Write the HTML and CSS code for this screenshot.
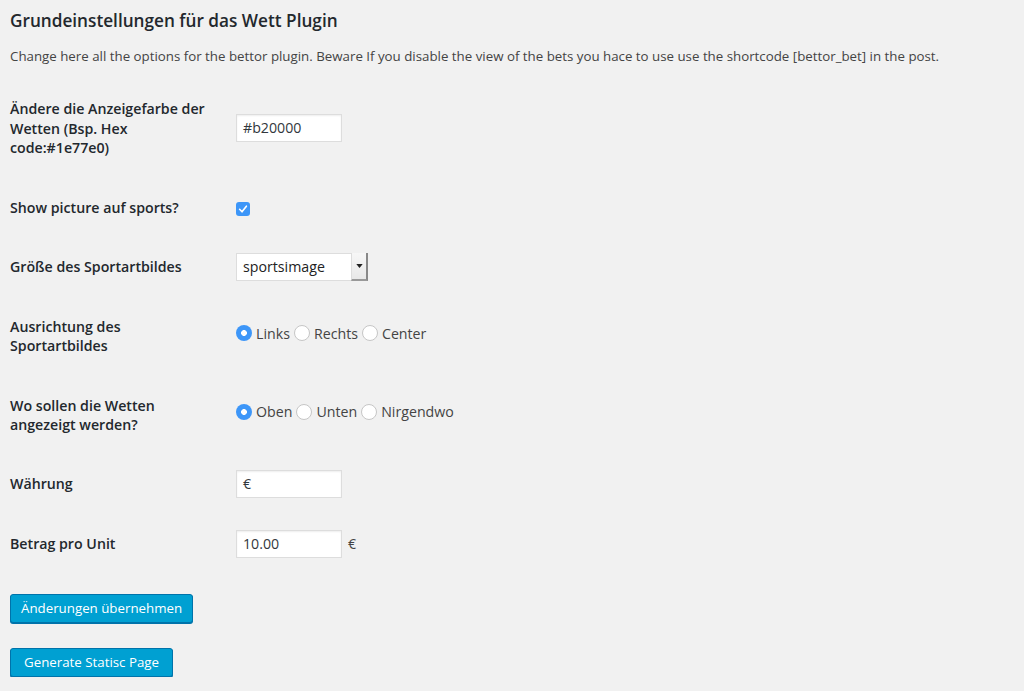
FILE: index.html
```html
<!DOCTYPE html>
<html lang="de">
<head>
<meta charset="utf-8">
<title>Grundeinstellungen</title>
<link rel="stylesheet" href="styles.css">
</head>
<body>
<div class="wrap">
  <h2 class="title">Grundeinstellungen für das Wett Plugin</h2>
  <p class="desc">Change here all the options for the bettor plugin. Beware If you disable the view of the bets you hace to use use the shortcode [bettor_bet] in the post.</p>
  <table class="form-table">
    <tr class="row-color">
      <th>Ändere die Anzeigefarbe der Wetten (Bsp. Hex code:#1e77e0)</th>
      <td><span class="text-input">#b20000</span></td>
    </tr>
    <tr>
      <th>Show picture auf sports?</th>
      <td><span class="checkbox"><svg viewBox="0 0 14 14" width="14" height="14"><path d="M3.6 7.3 L6 9.8 L10.4 4.2" fill="none" stroke="#fff" stroke-width="1.6" stroke-linecap="round" stroke-linejoin="round"/></svg></span></td>
    </tr>
    <tr>
      <th>Größe des Sportartbildes</th>
      <td><span class="select"><span class="select-value">sportsimage</span><span class="select-arrow"><svg viewBox="0 0 8 5" width="7" height="4"><path d="M0 0 H8 L4 5 Z" fill="#222"/></svg></span></span></td>
    </tr>
    <tr class="row-radio">
      <th>Ausrichtung des Sportartbildes</th>
      <td>
        <span class="radio-group">
          <span class="radio on"></span><span class="radio-label">Links</span>
          <span class="radio"></span><span class="radio-label">Rechts</span>
          <span class="radio"></span><span class="radio-label">Center</span>
        </span>
      </td>
    </tr>
    <tr class="row-radio row-position">
      <th>Wo sollen die Wetten angezeigt werden?</th>
      <td>
        <span class="radio-group">
          <span class="radio on"></span><span class="radio-label">Oben</span>
          <span class="radio"></span><span class="radio-label">Unten</span>
          <span class="radio"></span><span class="radio-label">Nirgendwo</span>
        </span>
      </td>
    </tr>
    <tr class="row-currency">
      <th>Währung</th>
      <td><span class="text-input">€</span></td>
    </tr>
    <tr>
      <th>Betrag pro Unit</th>
      <td><span class="text-input">10.00</span><span class="unit">€</span></td>
    </tr>
  </table>
  <div class="actions">
    <button class="button">Änderungen übernehmen</button>
  </div>
  <div class="actions second">
    <button class="button button-wide">Generate Statisc Page</button>
  </div>
</div>
</body>
</html>
```

FILE: styles.css
```css
html, body {
  margin: 0;
  padding: 0;
  background: #f1f1f1;
}
body {
  font-family: "Open Sans", "Noto Sans", sans-serif;
  color: #444;
  font-size: 13px;
}
.wrap {
  padding: 0 10px;
}
.title {
  margin: 0;
  padding-top: 9px;
  font-size: 17.2px;
  font-weight: 600;
  line-height: 23px;
  color: #23282d;
}
.desc {
  margin: 14px 0 0;
  font-size: 13.3px;
  line-height: 20px;
  color: #444;
}
.form-table {
  border-collapse: collapse;
  margin-top: 13px;
}
.form-table th {
  width: 206px;
  padding: 20px 20px 20px 0;
  text-align: left;
  vertical-align: top;
  font-size: 14.2px;
  font-weight: 600;
  line-height: 19.5px;
  color: #23282d;
}
.form-table td {
  padding: 0;
  vertical-align: middle;
  font-size: 14.2px;
  line-height: 19.5px;
  color: #444;
}
.row-position th {
  padding-bottom: 19px;
}
.row-currency th {
  padding-bottom: 21px;
}
.text-input {
  display: inline-block;
  box-sizing: border-box;
  width: 106px;
  height: 28px;
  padding: 3px 6px;
  background: #fff;
  border: 1px solid #ddd;
  box-shadow: inset 0 1px 2px rgba(0,0,0,.07);
  color: #32373c;
  font-size: 14.2px;
  line-height: 20px;
  vertical-align: middle;
}
.unit {
  margin-left: 6px;
  vertical-align: middle;
}
.checkbox {
  display: inline-block;
  width: 14px;
  height: 14px;
  border-radius: 3px;
  background: #3d96f8;
  vertical-align: middle;
}
.checkbox svg {
  display: block;
}
.select {
  display: inline-flex;
  box-sizing: border-box;
  width: 132px;
  height: 28px;
  background: #fff;
  border: 1px solid #ddd;
  vertical-align: middle;
}
.select-value {
  flex: 1;
  padding: 3px 6px;
  font-size: 14.2px;
  line-height: 20px;
  color: #222;
}
.select-arrow {
  width: 14px;
  display: flex;
  align-items: center;
  justify-content: center;
  background: linear-gradient(#f7f7f7, #e8e8e8);
  border-left: 1px solid #ddd;
  border-right: 2px solid #888;
  border-bottom: 2px solid #999;
  margin: -1px -1px -1px 0;
}
.radio-group {
  display: inline-flex;
  align-items: center;
  margin-top: -3px;
}
.radio {
  box-sizing: border-box;
  display: inline-block;
  width: 16px;
  height: 16px;
  border-radius: 50%;
  background: #fff;
  border: 1px solid #c6c6c6;
  margin-right: 4px;
}
.radio.on {
  border: none;
  background: radial-gradient(circle, #fff 0 2.6px, #3d96f8 3.2px);
}
.radio-label {
  margin-right: 4px;
  color: #444;
}
.actions {
  margin-top: 20px;
}
.actions.second {
  margin-top: 25px;
}
.button {
  font-family: "Open Sans", "Noto Sans", sans-serif;
  font-size: 13.3px;
  line-height: 27px;
  height: 29px;
  padding: 0 10px 1px;
  background: #00a0d2;
  border: 1px solid #0073aa;
  border-radius: 3px;
  box-shadow: 0 1px 0 #0073aa;
  color: #fff;
  cursor: pointer;
}
.button-wide {
  padding: 0 13px 1px;
}
```
